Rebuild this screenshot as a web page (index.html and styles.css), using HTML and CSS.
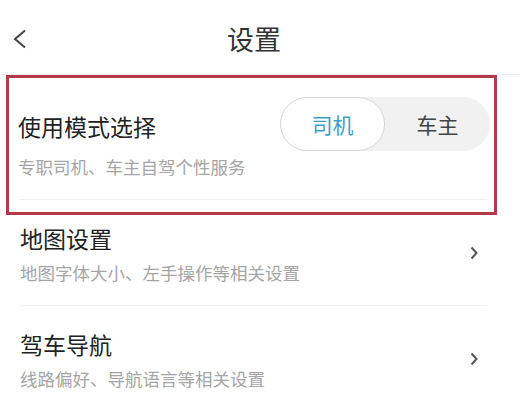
FILE: index.html
```html
<!DOCTYPE html>
<html lang="zh-CN">
<head>
    <meta charset="UTF-8">
    <meta name="viewport" content="width=device-width, initial-scale=1.0">
    <title>设置</title>
    <link rel="stylesheet" href="styles.css">
</head>
<body>
    <div class="page">
        <!-- 顶部标题栏 -->
        <div class="header">
            <svg class="back" width="14" height="20" viewBox="0 0 14 20">
                <polyline points="12,1.5 2,10 12,18.5" fill="none" stroke="#444" stroke-width="2"/>
            </svg>
            <div class="title">设置</div>
            <div></div>
        </div>

        <div class="list">
            <!-- 使用模式 -->
            <div class="mode-row">
                <div class="mode-top">
                    <div class="row-title">使用模式选择</div>
                    <div class="toggle">
                        <div class="toggle-item active">司机</div>
                        <div class="toggle-item">车主</div>
                    </div>
                </div>
                <div class="row-sub">专职司机、车主自驾个性服务</div>
            </div>

            <div class="row">
                <div class="row-text">
                    <div class="row-title">地图设置</div>
                    <div class="row-sub">地图字体大小、左手操作等相关设置</div>
                </div>
                <svg class="arrow" width="8" height="14" viewBox="0 0 8 14">
                    <polyline points="1.5,1.5 6.5,7 1.5,12.5" fill="none" stroke="#555" stroke-width="2"/>
                </svg>
            </div>

            <div class="row">
                <div class="row-text">
                    <div class="row-title">驾车导航</div>
                    <div class="row-sub">线路偏好、导航语言等相关设置</div>
                </div>
                <svg class="arrow" width="8" height="14" viewBox="0 0 8 14">
                    <polyline points="1.5,1.5 6.5,7 1.5,12.5" fill="none" stroke="#555" stroke-width="2"/>
                </svg>
            </div>
        </div>

        <!-- 红色标注框 -->
        <div class="highlight"></div>
    </div>
</body>
</html>
```

FILE: styles.css
```css
body {
    margin: 0;
    background-color: #fff;
    font-family: "Noto Sans CJK SC", "Noto Sans", sans-serif;
    color: #222;
}
.page {
    position: relative;
    width: 520px;
    height: 400px;
    overflow: hidden;
}
.header {
    height: 75px;
    box-sizing: border-box;
    padding: 4px 25px 0 13px;
    display: grid;
    grid-template-columns: 1fr auto 1fr;
    align-items: center;
    border-bottom: 1px solid #ececec;
}
.back {
    display: block;
}
.title {
    font-size: 27px;
    line-height: 32px;
    color: #333;
}
.list {
    margin: 0 33px 0 20px;
}
.mode-row {
    padding: 22px 0 22px;
    border-bottom: 1px solid #efefef;
}
.mode-top {
    display: flex;
    justify-content: space-between;
    align-items: center;
    margin-right: -3px;
}
.mode-top .row-title {
    margin-left: -2px;
    margin-top: 3px;
}
.mode-row .row-sub {
    margin-top: 6px;
    margin-left: -2px;
}
.row-title {
    font-size: 23px;
    line-height: 28px;
    color: #222;
}
.row-sub {
    font-size: 17.5px;
    line-height: 20px;
    color: #a5a5a5;
}
.toggle {
    display: flex;
    width: 210px;
    height: 54px;
    border-radius: 27px;
    background-color: #f1f1f1;
}
.toggle-item {
    flex: 1;
    display: flex;
    align-items: center;
    justify-content: center;
    font-size: 21px;
    color: #444;
    border-radius: 27px;
}
.toggle-item.active {
    flex: none;
    width: 105px;
    box-sizing: border-box;
    background-color: #fff;
    border: 1px solid #d6d6d6;
    color: #3d9fc9;
}
.row {
    display: flex;
    align-items: center;
    justify-content: space-between;
    padding: 24px 9px 22px 0;
    border-bottom: 1px solid #efefef;
}
.row .row-sub {
    margin-top: 11px;
}
.arrow {
    display: block;
    margin-top: -2px;
}
.highlight {
    position: absolute;
    left: 6px;
    top: 75px;
    width: 491px;
    height: 140px;
    box-sizing: border-box;
    border: 3px solid #b43a4a;
}
```
